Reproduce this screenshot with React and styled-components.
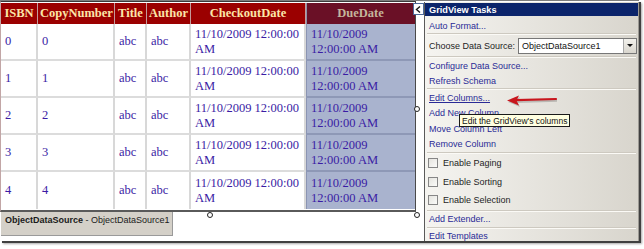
import React from 'react';
import styled, { createGlobalStyle } from 'styled-components';

const GlobalStyle = createGlobalStyle`
  html, body {
    margin: 0;
    padding: 0;
    background: #ffffff;
  }
`;

const rows = [0, 1, 2, 3, 4].map((n) => ({
  isbn: n,
  copy: n,
  title: 'abc',
  author: 'abc',
  checkout: '11/10/2009 12:00:00 AM',
  due: '11/10/2009 12:00:00 AM',
}));

const colWidths = [37, 77, 32, 44, 115, 109];

const taskLinks1 = ['Configure Data Source...', 'Refresh Schema'];
const taskLinks2 = ['Edit Columns...', 'Add New Column', 'Move Column Left', 'Remove Column'];
const checks = ['Enable Paging', 'Enable Sorting', 'Enable Selection'];

const App = () => {
  return (
    <Page>
      <GlobalStyle />
      <Shot>
        <TopStrip />
        <Main>
          <DesignSurface>
            <GridFrame>
              <Grid>
                <colgroup>
                  {colWidths.map((w, i) => (
                    <col key={i} style={{ width: w }} />
                  ))}
                </colgroup>
                <thead>
                  <HeadRow>
                    <Th>ISBN</Th>
                    <Th>CopyNumber</Th>
                    <Th>Title</Th>
                    <Th>Author</Th>
                    <Th>CheckoutDate</Th>
                    <Th $due>DueDate</Th>
                  </HeadRow>
                </thead>
                <tbody>
                  {rows.map((r) => (
                    <BodyRow key={r.isbn}>
                      <Td>{r.isbn}</Td>
                      <Td>{r.copy}</Td>
                      <Td>{r.title}</Td>
                      <Td>{r.author}</Td>
                      <Td>{r.checkout}</Td>
                      <Td $due>{r.due}</Td>
                    </BodyRow>
                  ))}
                </tbody>
              </Grid>
              <SmartTag>
                <svg width="7" height="7" viewBox="0 0 7 7">
                  <path d="M5 0.5 L1.5 3.5 L5 6.5" fill="none" stroke="#1a1a1a" strokeWidth="1.4" />
                </svg>
              </SmartTag>
              <Handle $x={206} $y={210} />
              <Handle $x={413} $y={210} />
              <Handle $x={413} $y={104} />
            </GridFrame>
            <SourceLabel>
              <b>ObjectDataSource</b> - ObjectDataSource1
            </SourceLabel>
          </DesignSurface>

          <Panel>
            <TitleBar>GridView Tasks</TitleBar>
            <Section>
              <TaskRow $h={17} $pt={3}><TaskLink>Auto Format...</TaskLink></TaskRow>
            </Section>
            <Sep />
            <Section>
              <TaskRow $h={21}>
                <PlainText>Choose Data Source:</PlainText>
                <Select>
                  <SelectText>ObjectDataSource1</SelectText>
                  <DropBtn><Caret /></DropBtn>
                </Select>
              </TaskRow>
            </Section>
            <Sep />
            <Section>
              {taskLinks1.map((t) => (
                <TaskRow key={t} $h={15}><TaskLink>{t}</TaskLink></TaskRow>
              ))}
            </Section>
            <Sep />
            <Section>
              {taskLinks2.map((t, i) => (
                <TaskRow key={t} $h={15.5}>
                  <TaskLink $underline={i === 0}>{t}</TaskLink>
                </TaskRow>
              ))}
            </Section>
            <Sep />
            <Section>
              {checks.map((t) => (
                <CheckRow key={t}>
                  <Box />
                  <PlainText>{t}</PlainText>
                </CheckRow>
              ))}
            </Section>
            <Sep />
            <Section>
              <TaskRow $h={15}><TaskLink>Add Extender...</TaskLink></TaskRow>
            </Section>
            <Sep />
            <Section>
              <TaskRow $h={15}><TaskLink>Edit Templates</TaskLink></TaskRow>
            </Section>
          </Panel>
        </Main>
      </Shot>

      <Arrow width="54" height="14" viewBox="0 0 54 14">
        <g transform="translate(1,1.5)" fill="#000" opacity="0.18">
          <path d="M50 5 L10 6.2" stroke="#000" strokeWidth="2.4" />
          <path d="M1 6.5 L13 1.5 L10.5 6.4 L13 11.5 Z" />
        </g>
        <path d="M50 5 L10 6.2" stroke="#c8161d" strokeWidth="2.2" strokeLinecap="round" />
        <path d="M1 6.5 L13 1.5 L10.5 6.4 L13 11.5 Z" fill="#c8161d" />
      </Arrow>

      <Tooltip>Edit the GridView's columns</Tooltip>
    </Page>
  );
};

const Page = styled.div`
  position: relative;
  width: 644px;
  height: 249px;
  overflow: hidden;
  background: #ffffff;
`;

const Shot = styled.div`
  display: flex;
  flex-direction: column;
  width: 639px;
  height: 241px;
  background: #ffffff;
  box-shadow: 2px 2px 0 #404040, 3px 3px 2px rgba(0, 0, 0, 0.35);
  overflow: hidden;
`;

const TopStrip = styled.div`
  height: 1px;
  background: #7d7d7d;
  flex: none;
`;

const Main = styled.div`
  display: flex;
  flex: 1;
  align-items: stretch;
`;

const DesignSurface = styled.div`
  display: flex;
  flex-direction: column;
  width: 424px;
  flex: none;
`;

const GridFrame = styled.div`
  position: relative;
  width: 414px;
  border-top: 1px solid #3c3c3c;
  border-right: 1px solid #4a4a4a;
  border-bottom: 2px solid #5a5a5a;
  border-left: 1px solid #c2a6a6;
  padding: 1px 0 1px 0;
`;

const Grid = styled.table`
  table-layout: fixed;
  width: 414px;
  border-collapse: separate;
  border-spacing: 0;
  font-family: "Liberation Serif", "Times New Roman", serif;
  font-size: 12.5px;
  line-height: 15.5px;
`;

const HeadRow = styled.tr`
  height: 21px;
`;

const BodyRow = styled.tr`
  height: 37px;
`;

const Th = styled.th`
  box-sizing: border-box;
  padding: 0 2px;
  background: ${(p) => (p.$due ? '#6a1026' : '#9b0000')};
  color: ${(p) => (p.$due ? '#c4b59c' : '#fbe6a8')};
  font-weight: bold;
  text-align: center;
  white-space: nowrap;
  border-right: 1px solid ${(p) => (p.$due ? '#6a1026' : '#c49a9a')};
  border-left: ${(p) => (p.$due ? '1px solid #8c8fa8' : 'none')};
`;

const Td = styled.td`
  box-sizing: border-box;
  padding: 1px 4px 0 4px;
  vertical-align: middle;
  color: #3a1ca4;
  background: ${(p) => (p.$due ? '#a9b3ce' : '#ffffff')};
  border-right: ${(p) => (p.$due ? 'none' : '2px solid #d8d8d8')};
  border-left: ${(p) => (p.$due ? '1px solid #8b94b2' : 'none')};
  border-bottom: 2px solid ${(p) => (p.$due ? '#8e98b6' : '#dcdcdc')};
  tr:last-child & {
    border-bottom: none;
  }
`;

const SmartTag = styled.div`
  position: absolute;
  top: 1px;
  right: -9px;
  width: 9px;
  height: 10px;
  display: flex;
  align-items: center;
  justify-content: center;
  background: #ffffff;
  border: 1px solid #4f6a9a;
`;

const Handle = styled.div`
  position: absolute;
  left: ${(p) => p.$x}px;
  top: ${(p) => p.$y}px;
  width: 4px;
  height: 4px;
  border: 1px solid #222;
  border-radius: 50%;
  background: #ffffff;
`;

const SourceLabel = styled.div`
  width: 167px;
  height: 20px;
  margin-left: 1px;
  padding: 3px 0 0 4px;
  background: #d4d0c8;
  border-right: 1px solid #9a9a9a;
  border-bottom: 1px solid #9a9a9a;
  font-family: "Liberation Sans", Arial, sans-serif;
  font-size: 9px;
  color: #1a1a1a;
  white-space: nowrap;

  b {
    font-weight: bold;
  }
`;

const Panel = styled.div`
  display: flex;
  flex-direction: column;
  width: 213px;
  margin-top: 1px;
  border-left: 1px solid #5a5a5a;
  border-right: 1px solid #9c9a94;
  background: linear-gradient(to right, #f5f4f0, #d8d5cd);
  font-family: "Liberation Sans", Arial, sans-serif;
  font-size: 9px;
`;

const TitleBar = styled.div`
  flex: none;
  height: 13px;
  margin-top: 1px;
  padding-left: 4px;
  display: flex;
  align-items: center;
  background: #0b246b;
  color: #ffffff;
  font-weight: bold;
  font-size: 9.2px;
`;

const Section = styled.div`
  display: flex;
  flex-direction: column;
  flex: none;
`;

const TaskRow = styled.div`
  box-sizing: border-box;
  display: flex;
  align-items: center;
  height: ${(p) => p.$h}px;
  padding-left: 4px;
  padding-top: ${(p) => p.$pt || 0}px;
  white-space: nowrap;
`;

const TaskLink = styled.span`
  color: #2a2a96;
  text-decoration: ${(p) => (p.$underline ? 'underline' : 'none')};
`;

const PlainText = styled.span`
  color: #1e1e1e;
`;

const Select = styled.div`
  display: flex;
  align-items: stretch;
  width: 117px;
  height: 14px;
  margin-left: auto;
  margin-right: 1px;
  background: #ffffff;
  border: 1px solid #777777;
`;

const SelectText = styled.span`
  flex: 1;
  display: flex;
  align-items: center;
  padding-left: 3px;
  color: #111111;
`;

const DropBtn = styled.div`
  width: 12px;
  display: flex;
  align-items: center;
  justify-content: center;
  background: linear-gradient(#f2f1ec, #d9d6ce);
  border-left: 1px solid #a8a8a8;
`;

const Caret = styled.div`
  width: 0;
  height: 0;
  border-left: 3px solid transparent;
  border-right: 3px solid transparent;
  border-top: 3px solid #111111;
`;

const Sep = styled.div`
  flex: none;
  margin: 0 2px;
  border-top: 1px solid #cdc9c0;
  border-bottom: 1px solid #fbfaf6;
`;

const CheckRow = styled.div`
  display: flex;
  align-items: center;
  gap: 5px;
  height: 18.5px;
  padding-left: 3px;
`;

const Box = styled.div`
  width: 8px;
  height: 8px;
  border: 1px solid #868686;
  background: linear-gradient(135deg, #e4e3de, #fbfbf9);
`;

const Arrow = styled.svg`
  position: absolute;
  left: 506px;
  top: 94px;
`;

const Tooltip = styled.div`
  position: absolute;
  left: 459px;
  top: 114px;
  height: 13px;
  box-sizing: border-box;
  padding: 0 2px;
  display: flex;
  align-items: center;
  background: #ffffe1;
  border: 1px solid #1a1a1a;
  font-family: "Liberation Sans", Arial, sans-serif;
  font-size: 8.5px;
  color: #111111;
  white-space: nowrap;
`;

export default App;
